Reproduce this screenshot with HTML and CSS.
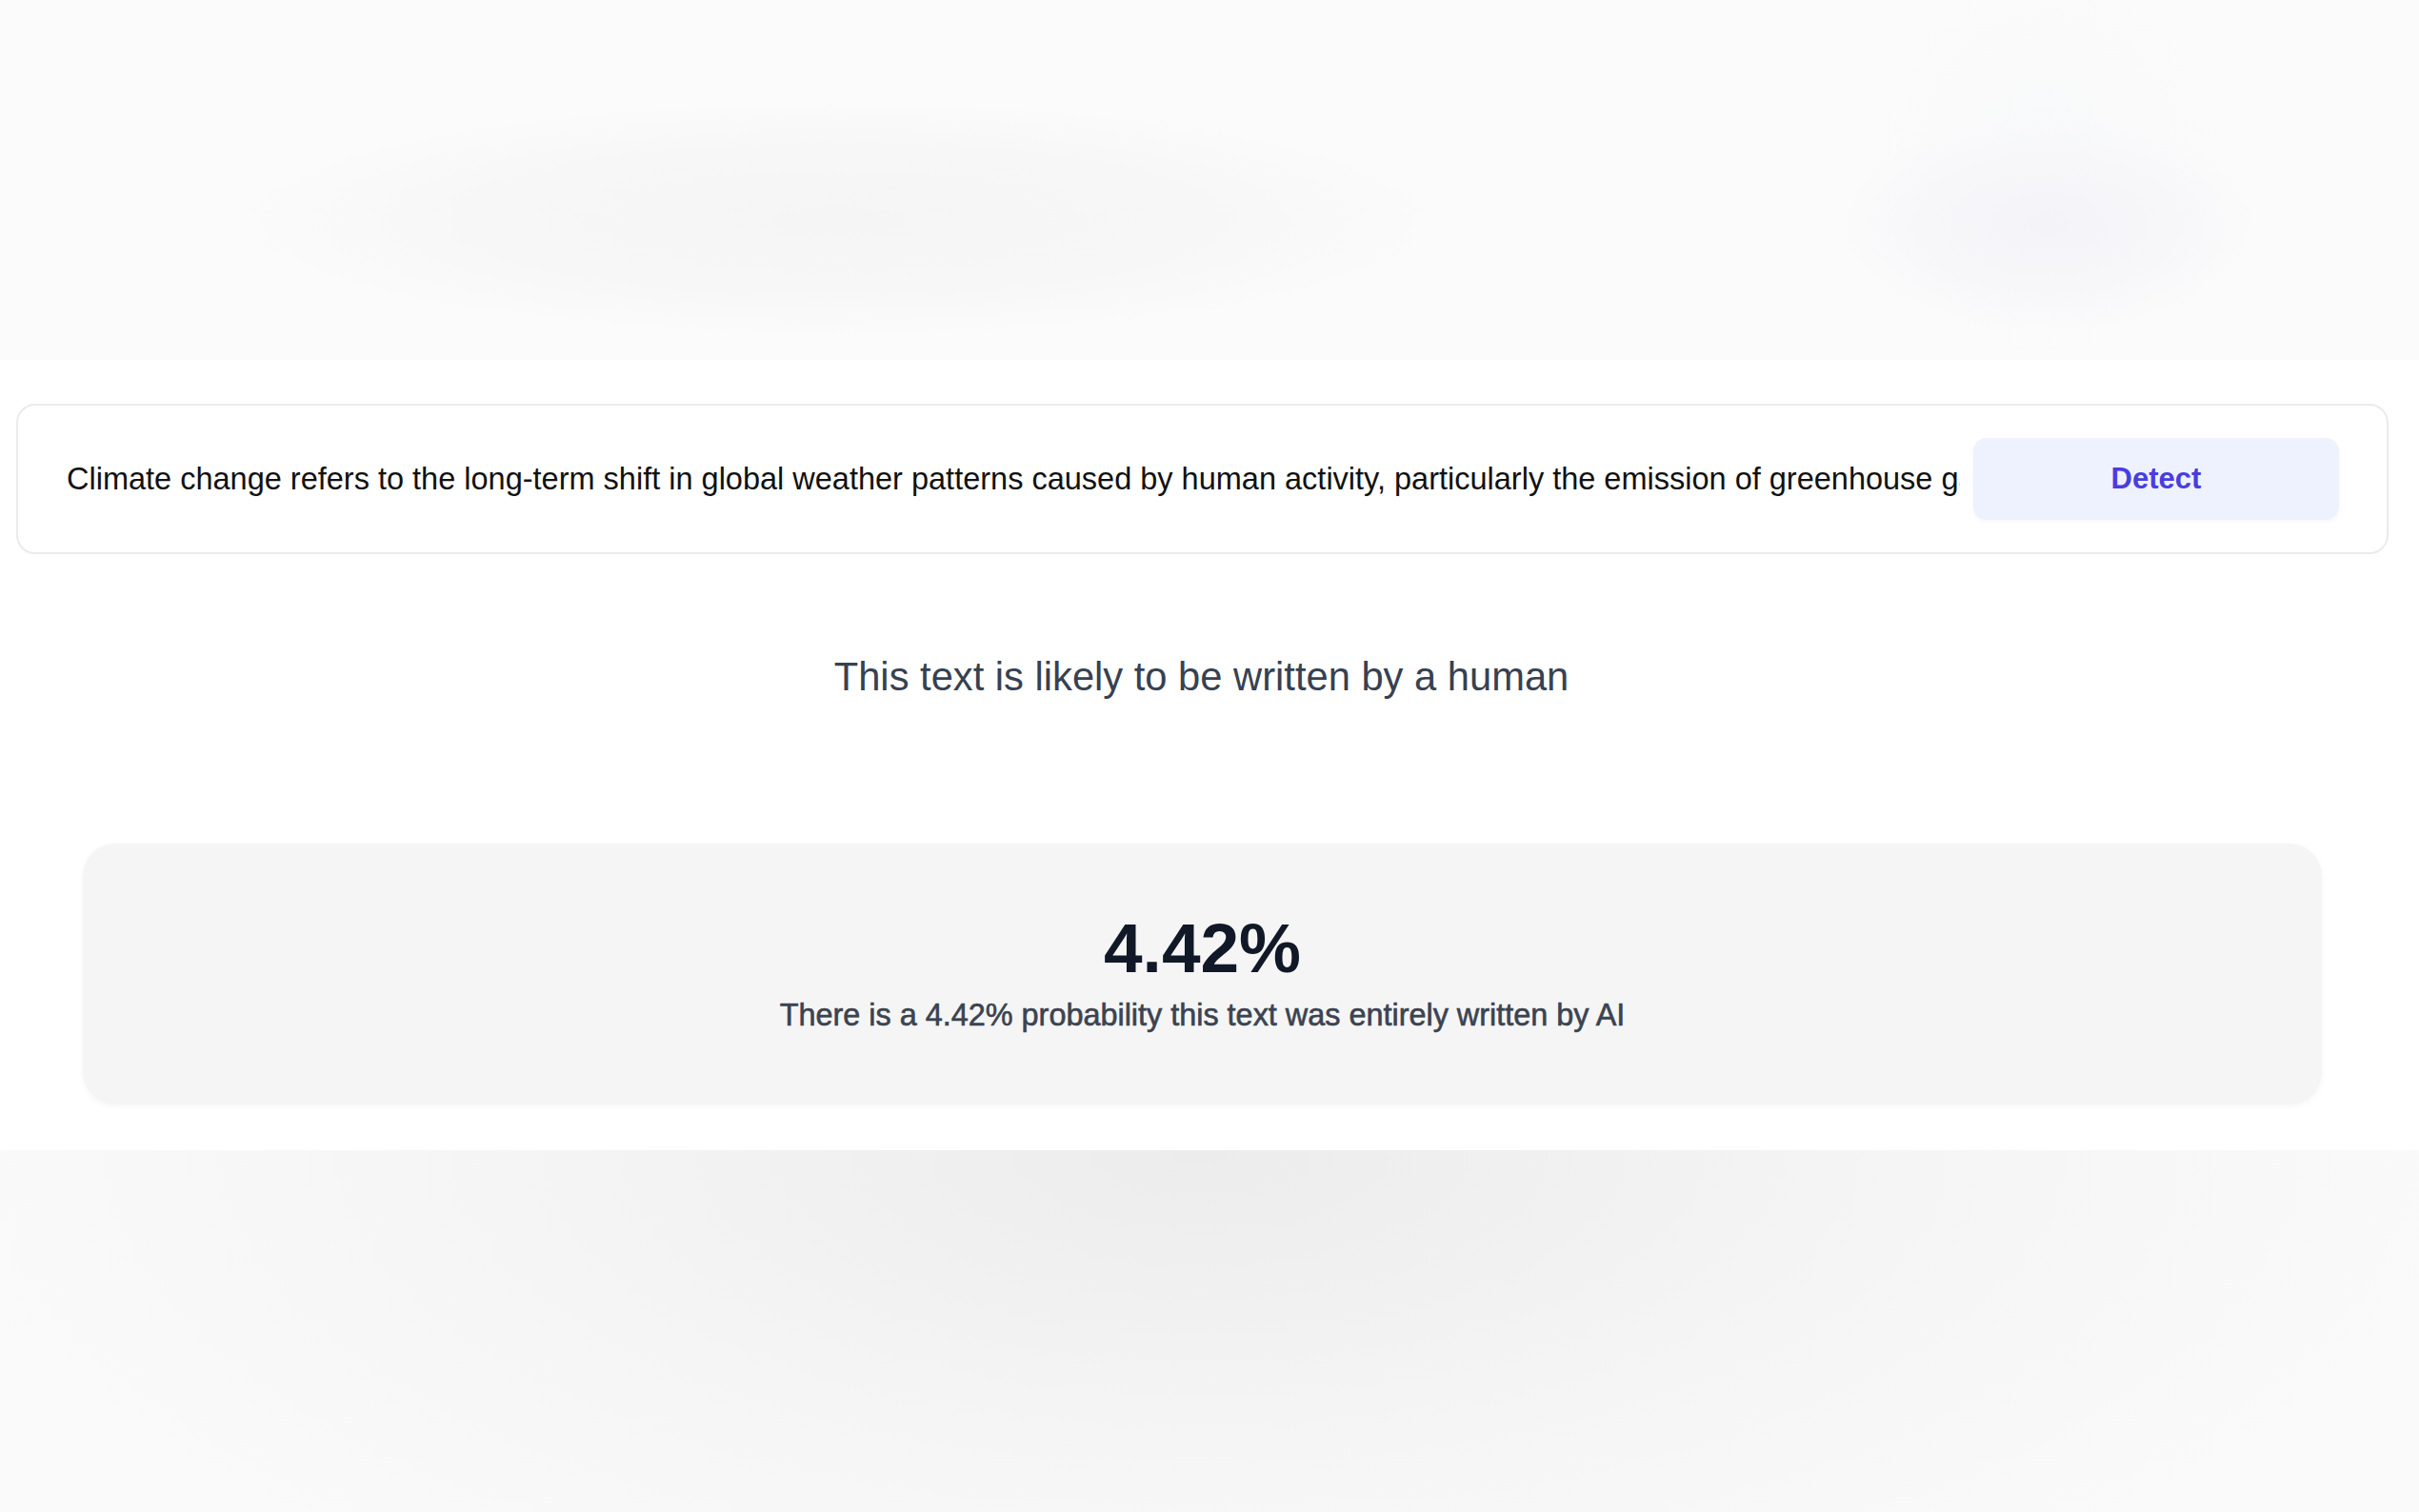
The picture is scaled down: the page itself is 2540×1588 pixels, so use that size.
FILE: index.html
```html
<!DOCTYPE html>
<html lang="en">
<head>
<meta charset="utf-8">
<title>AI Text Detector</title>
<link rel="stylesheet" href="styles.css">
</head>
<body>
  <div class="hero-band"></div>
  <main class="detector">
    <form class="input-card" onsubmit="return false;">
      <input class="text-input" type="text" value="Climate change refers to the long-term shift in global weather patterns caused by human activity, particularly the emission of greenhouse gases such as carbon dioxide and methane.">
      <button class="detect-btn" type="submit">Detect</button>
    </form>
    <p class="verdict">This text is likely to be written by a human</p>
    <section class="result-card">
      <div class="result-value">4.42%</div>
      <p class="result-caption">There is a 4.42% probability this text was entirely written by AI</p>
    </section>
  </main>
  <div class="footer-band"></div>
</body>
</html>
```
FILE: styles.css
```css
html, body {
  margin: 0;
  padding: 0;
  background: #ffffff;
  font-family: "Liberation Sans", Arial, sans-serif;
}

body {
  width: 2540px;
  min-height: 1588px;
  overflow: hidden;
}

.hero-band {
  height: 378px;
  background:
    radial-gradient(ellipse 640px 125px at 880px 230px, #f5f5f6 0%, #f7f7f8 60%, rgba(251,251,251,0) 100%),
    radial-gradient(ellipse 220px 110px at 2150px 235px, #f4f4f8 0%, #f7f7fa 60%, rgba(251,251,251,0) 100%),
    radial-gradient(ellipse 200px 230px at 2150px 170px, #f8f9fa 0%, rgba(251,251,251,0) 100%),
    #fbfbfb;
}

.detector {
  width: 2523px;
  display: flex;
  flex-direction: column;
  padding-top: 46px;
}

.input-card {
  display: flex;
  align-items: center;
  gap: 14px;
  margin: 0 15px 0 17px;
  padding: 34px 50px 34px 51px;
  border: 2px solid #ebebeb;
  border-radius: 20px;
  background: #fff;
}

.text-input {
  flex: 1;
  min-width: 0;
  border: none;
  outline: none;
  padding: 0;
  background: transparent;
  font-family: "Liberation Sans", Arial, sans-serif;
  font-size: 32.5px;
  color: #111111;
}

.detect-btn {
  flex: none;
  width: 384px;
  height: 86px;
  border: none;
  border-radius: 14px;
  background: #eef2fe;
  box-shadow: 0 2px 4px rgba(99, 102, 241, 0.06);
  color: #4a3de0;
  font-family: "Liberation Sans", Arial, sans-serif;
  font-weight: 700;
  font-size: 31px;
  cursor: pointer;
}

.verdict {
  margin: 104px 0 0;
  text-align: center;
  font-size: 41.7px;
  line-height: 50px;
  color: #374151;
}

.result-card {
  margin: 150px 85px 0 87px;
  padding: 73px 0 75px;
  background: #f5f5f5;
  border-radius: 34px;
  box-shadow: 0 2px 6px rgba(0, 0, 0, 0.04);
  text-align: center;
}

.result-value {
  font-size: 73px;
  line-height: 74px;
  font-weight: 700;
  color: #111827;
}

.result-caption {
  margin: 14px 0 0;
  font-size: 32.4px;
  line-height: 38px;
  color: #3b4350;
  -webkit-text-stroke: 0.6px #3b4350;
}

.footer-band {
  margin-top: 48px;
  height: 380px;
  background:
    radial-gradient(ellipse 1350px 560px at 1262px 0px, #ececec 0%, #f0f0f0 25%, #f5f5f5 55%, #fafafa 100%);
}
```
